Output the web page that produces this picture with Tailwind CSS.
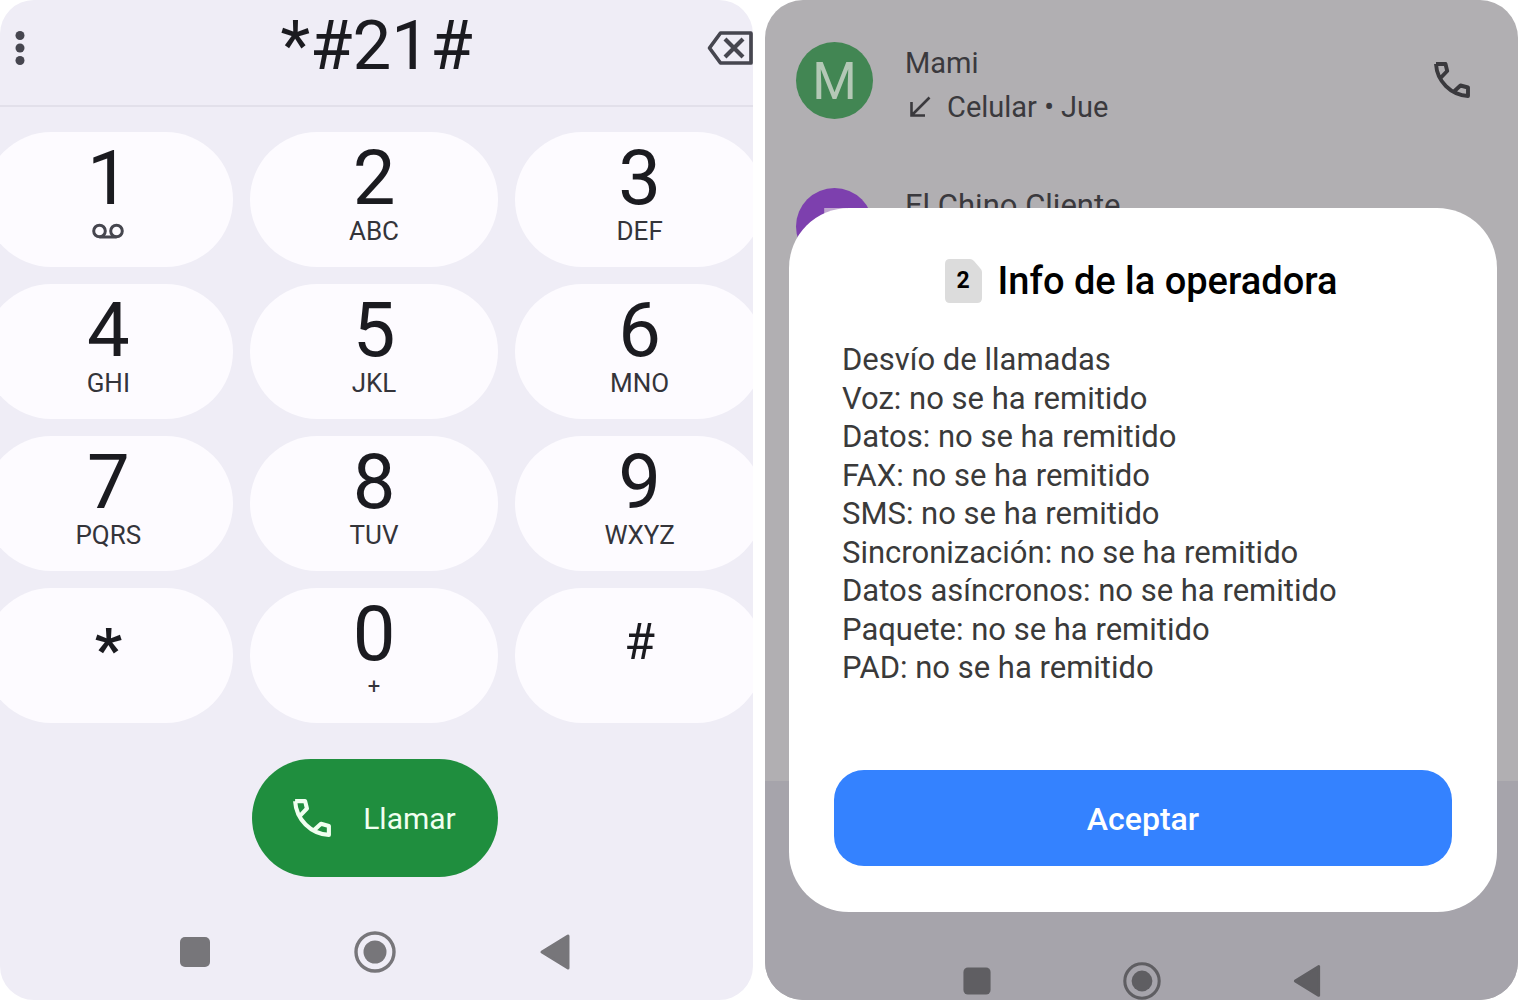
<!DOCTYPE html>
<html lang="es">
<head>
  <meta charset="UTF-8">
  <meta name="viewport" content="width=device-width, initial-scale=1.0">
  <script src="https://cdn.jsdelivr.net/npm/@tailwindcss/browser@4"></script>
  <title>Desvío de llamadas</title>
</head>
<body class="bg-white font-[Roboto,sans-serif]">
  <svg class="hidden">
    <symbol id="phone" viewBox="0 0 36 36">
      <path d="M2 2H11.5L13.200 9L7 15.500M2 2A34 34 0 0 0 34 34V25.500L26.500 23.500L20.500 29" fill="none" stroke="currentColor" stroke-width="3.900" stroke-linejoin="round"/>
    </symbol>
    <symbol id="nav-recent" viewBox="0 0 42 42">
      <rect x="6" y="6" width="30" height="30" rx="5" fill="currentColor"/>
    </symbol>
    <symbol id="nav-home" viewBox="0 0 42 42">
      <circle cx="21" cy="21" r="19" fill="none" stroke="currentColor" stroke-width="3.400"/>
      <circle cx="21" cy="21" r="11.500" fill="currentColor"/>
    </symbol>
    <symbol id="nav-back" viewBox="0 0 42 42">
      <path d="M8 21L34 5V37Z" fill="currentColor" stroke="currentColor" stroke-width="3" stroke-linejoin="round"/>
    </symbol>
  </svg>

  <main class="grid grid-cols-2 gap-3 min-h-screen">
    <!-- Teclado -->
    <section class="flex flex-col bg-[#efedf6] rounded-[34px] overflow-hidden text-[#1b1b20]">
      <header class="flex items-center h-[107px] pb-[10px] border-b-2 border-[#e2e0ea]">
        <button class="w-12 shrink-0 pl-[14px] text-[#46464f]" aria-label="Más opciones">
          <svg class="w-3 h-9" viewBox="0 0 12 36" fill="currentColor"><circle cx="6" cy="5.500" r="4.500"/><circle cx="6" cy="18" r="4.500"/><circle cx="6" cy="30.500" r="4.500"/></svg>
        </button>
        <input type="text" value="*#21#" aria-label="Número" class="flex-1 min-w-0 pb-1 text-center text-[69px] leading-[84px] outline-none">
        <button class="w-12 shrink-0 flex justify-end text-[#46464f]" aria-label="Borrar">
          <svg class="w-[46px] h-9" viewBox="0 0 46 36" fill="none" stroke="currentColor" stroke-width="3.700" stroke-linejoin="round"><path d="M2.500 18L13.500 3H44V33H13.500Z"/><path d="M18 9L36 27M36 9L18 27" stroke-width="4.200"/></svg>
        </button>
      </header>

      <div class="grid grid-cols-3 gap-[17px] mt-[25px] -ml-4 -mr-[11px]">
        <button class="h-[135px] rounded-full bg-[#fdfbff] flex flex-col items-center pt-2">
          <span class="text-[76px] leading-[76px]">1</span>
          <svg class="w-8 h-[30px] text-[#46464f]" viewBox="0 0 32 30" fill="none" stroke="currentColor" stroke-width="3"><circle cx="7.500" cy="15" r="5.800"/><circle cx="24.500" cy="15" r="5.800"/><path d="M7.500 21H24.500"/></svg>
        </button>
        <button class="h-[135px] rounded-full bg-[#fdfbff] flex flex-col items-center pt-2">
          <span class="text-[76px] leading-[76px]">2</span>
          <span class="text-[26px] leading-[30px] text-[#34343a]">ABC</span>
        </button>
        <button class="h-[135px] rounded-full bg-[#fdfbff] flex flex-col items-center pt-2">
          <span class="text-[76px] leading-[76px]">3</span>
          <span class="text-[26px] leading-[30px] text-[#34343a]">DEF</span>
        </button>
        <button class="h-[135px] rounded-full bg-[#fdfbff] flex flex-col items-center pt-2">
          <span class="text-[76px] leading-[76px]">4</span>
          <span class="text-[26px] leading-[30px] text-[#34343a]">GHI</span>
        </button>
        <button class="h-[135px] rounded-full bg-[#fdfbff] flex flex-col items-center pt-2">
          <span class="text-[76px] leading-[76px]">5</span>
          <span class="text-[26px] leading-[30px] text-[#34343a]">JKL</span>
        </button>
        <button class="h-[135px] rounded-full bg-[#fdfbff] flex flex-col items-center pt-2">
          <span class="text-[76px] leading-[76px]">6</span>
          <span class="text-[26px] leading-[30px] text-[#34343a]">MNO</span>
        </button>
        <button class="h-[135px] rounded-full bg-[#fdfbff] flex flex-col items-center pt-2">
          <span class="text-[76px] leading-[76px]">7</span>
          <span class="text-[26px] leading-[30px] text-[#34343a]">PQRS</span>
        </button>
        <button class="h-[135px] rounded-full bg-[#fdfbff] flex flex-col items-center pt-2">
          <span class="text-[76px] leading-[76px]">8</span>
          <span class="text-[26px] leading-[30px] text-[#34343a]">TUV</span>
        </button>
        <button class="h-[135px] rounded-full bg-[#fdfbff] flex flex-col items-center pt-2">
          <span class="text-[76px] leading-[76px]">9</span>
          <span class="text-[26px] leading-[30px] text-[#34343a]">WXYZ</span>
        </button>
        <button class="h-[135px] rounded-full bg-[#fdfbff] flex flex-col items-center pt-6">
          <span class="text-[60px] leading-[76px] font-bold">*</span>
        </button>
        <button class="h-[135px] rounded-full bg-[#fdfbff] flex flex-col items-center pt-2">
          <span class="text-[76px] leading-[76px]">0</span>
          <span class="text-[22px] leading-[30px] text-[#34343a]">+</span>
        </button>
        <button class="h-[135px] rounded-full bg-[#fdfbff] flex flex-col items-center pt-4">
          <span class="text-[50px] leading-[76px]">#</span>
        </button>
      </div>

      <div class="flex flex-col flex-1 items-center mt-9 pr-1">
        <button class="flex items-center justify-center gap-8 w-[246px] h-[118px] rounded-full bg-[#1f8e3e] text-[#f0fff0] text-[30px]">
          <svg class="w-[38px] h-[38px]"><use href="#phone"/></svg>
          Llamar
        </button>

        <nav class="flex gap-[138px] mt-auto pb-[27px] text-[#77767a]">
          <button aria-label="Recientes"><svg class="w-[42px] h-[42px]"><use href="#nav-recent"/></svg></button>
          <button aria-label="Inicio"><svg class="w-[42px] h-[42px]"><use href="#nav-home"/></svg></button>
          <button aria-label="Atrás"><svg class="w-[42px] h-[42px]"><use href="#nav-back"/></svg></button>
        </nav>
      </div>
    </section>

    <!-- Registro de llamadas con el aviso de la operadora -->
    <section class="relative flex flex-col bg-[#b1afb2] rounded-[38px] overflow-hidden">
      <ul class="flex-1 pt-[42px] pl-[31px] pr-12 text-[#3a393d]">
        <li class="flex items-start h-[146px]">
          <span class="flex items-center justify-center w-[77px] h-[77px] pt-1 rounded-full bg-[#428653] text-[#b4c8b6] text-[51px]">M</span>
          <div class="flex-1 ml-8 -mt-px text-[29px] leading-[44px]">
            <p>Mami</p>
            <p class="flex items-center">
              <svg class="w-6 h-6 ml-1 mr-[14px]" viewBox="0 0 24 24" fill="none" stroke="currentColor" stroke-width="2.600"><path d="M20.500 2.500L3 20M2.500 7V20.500H16"/></svg>
              Celular • Jue
            </p>
          </div>
          <button class="mt-5" aria-label="Llamar a Mami"><svg class="w-9 h-9"><use href="#phone"/></svg></button>
        </li>
        <li class="flex items-start h-[146px]">
          <span class="flex items-center justify-center w-[77px] h-[77px] pt-1 rounded-full bg-[#7d40ae] text-[#bfa6cf] text-[51px]">E</span>
          <p class="ml-8 -mt-1 text-[31px] leading-[44px]">El Chino Cliente</p>
        </li>
      </ul>
      <nav class="flex items-end justify-center gap-[127px] h-[219px] bg-[#a6a4ab] text-[#5f5e62]">
        <button aria-label="Recientes"><svg class="w-[38px] h-[38px]"><use href="#nav-recent"/></svg></button>
        <button aria-label="Inicio"><svg class="w-[38px] h-[38px]"><use href="#nav-home"/></svg></button>
        <button aria-label="Atrás"><svg class="w-[38px] h-[38px]"><use href="#nav-back"/></svg></button>
      </nav>

      <div role="dialog" aria-labelledby="titulo" class="absolute top-[208px] bottom-[88px] left-6 right-[21px] flex flex-col px-[45px] pt-[49px] pb-[46px] rounded-[60px] bg-white">
        <div class="flex items-center justify-center gap-4 pr-1">
          <span class="relative flex items-center justify-center w-[37px] h-11 text-[23px] font-bold text-black">
            <svg class="absolute inset-0 w-full h-full" viewBox="0 0 37 44"><path d="M5 0H25Q27 0 29 2L35 9Q37 11 37 13V39Q37 44 32 44H5Q0 44 0 39V5Q0 0 5 0Z" fill="#dcdcdc"/></svg>
            <span class="relative">2</span>
          </span>
          <h1 id="titulo" class="text-[38px] leading-[48px] font-medium text-black">Info de la operadora</h1>
        </div>
        <ul class="flex flex-col justify-between h-[346px] mt-[36px] ml-2 text-[31px] leading-[38px] text-[#3a3a3a]">
          <li>Desvío de llamadas</li>
          <li>Voz: no se ha remitido</li>
          <li>Datos: no se ha remitido</li>
          <li>FAX: no se ha remitido</li>
          <li>SMS: no se ha remitido</li>
          <li>Sincronización: no se ha remitido</li>
          <li>Datos asíncronos: no se ha remitido</li>
          <li>Paquete: no se ha remitido</li>
          <li>PAD: no se ha remitido</li>
        </ul>
        <button class="h-24 mt-auto pt-[2px] rounded-[30px] bg-[#3482ff] text-white text-[32px] font-medium">Aceptar</button>
      </div>
    </section>
  </main>
</body>
</html>
